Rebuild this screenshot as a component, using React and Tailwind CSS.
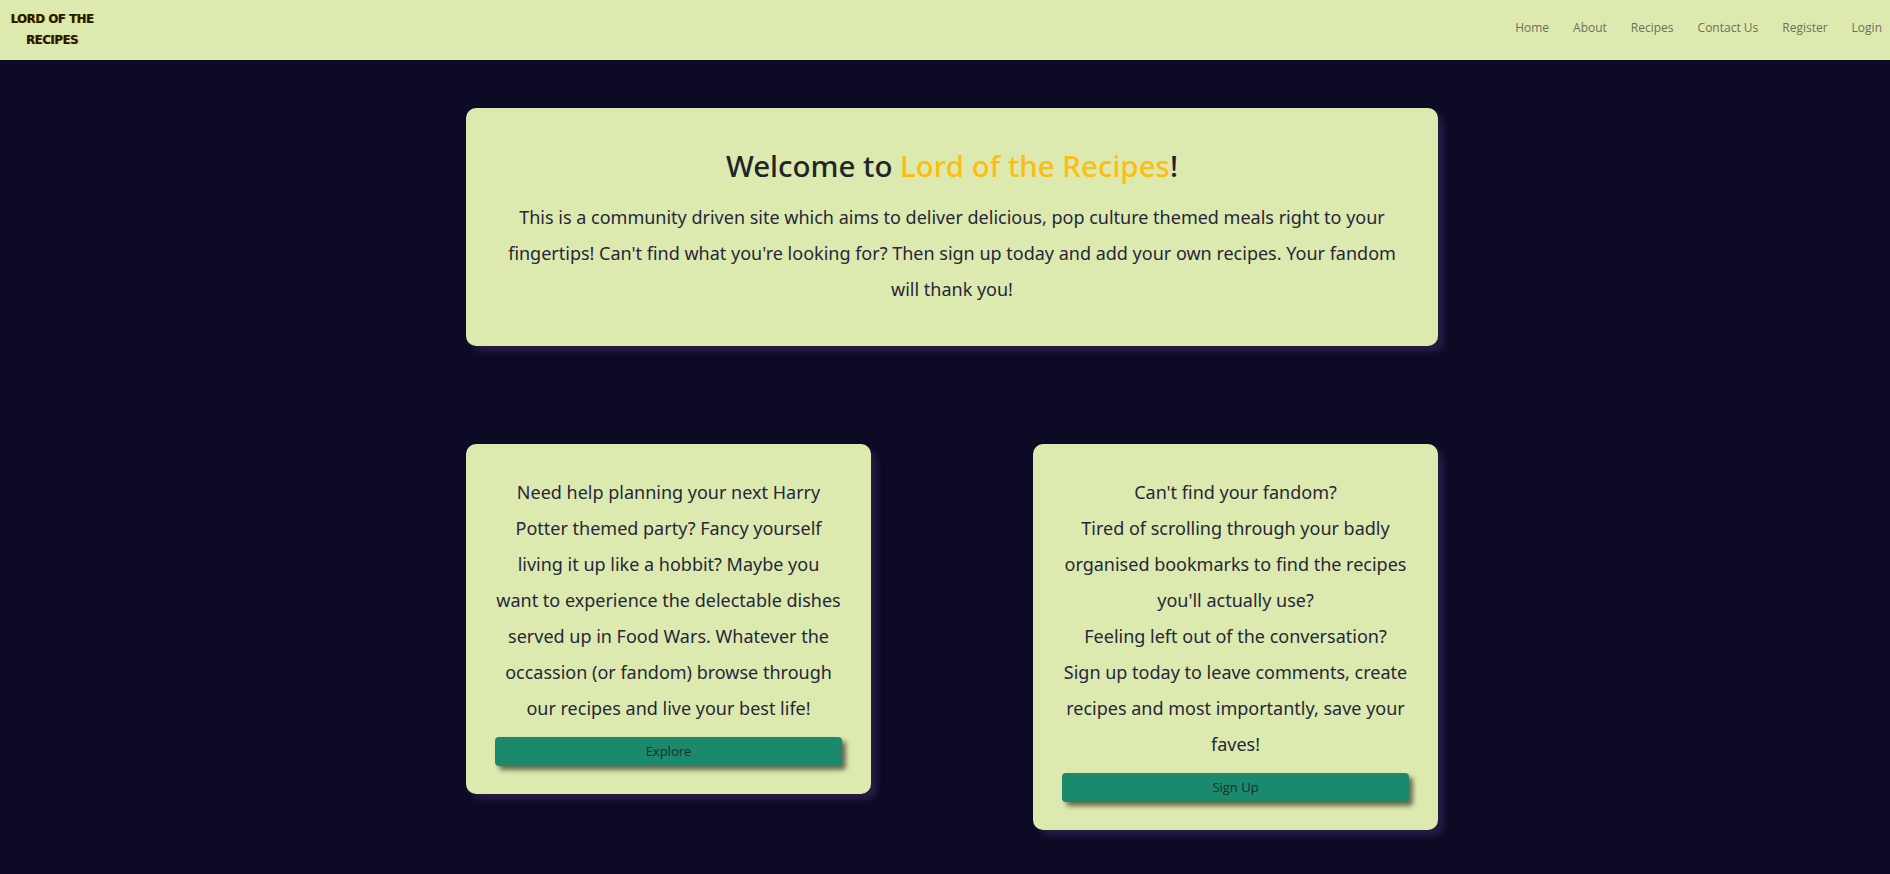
export default function App() {
  const navItems = ["Home", "About", "Recipes", "Contact Us", "Register", "Login"];
  return (
    <div className="min-h-screen bg-[#0c0a25] font-['Noto_Sans',sans-serif] text-[#212529]">
      <header className="h-[60px] bg-[#ddeaaf] flex items-center justify-between pl-[8px] pr-[8px]">
        <div className="w-[88px] text-center text-[13px] leading-[21px] font-bold text-[#1c1a10] font-['DejaVu_Sans_Condensed','DejaVu_Sans',sans-serif] tracking-[-0.4px] [text-shadow:1px_0_0_#c9a400] -mt-[3px]">
          LORD OF THE
          <br />
          RECIPES
        </div>
        <nav className="flex items-center gap-[24px] text-[12px] text-[#6e7058] font-['Open_Sans',sans-serif] mt-[-4px]">
          {navItems.map((item) => (
            <a key={item} href="#" className="leading-[20px]">
              {item}
            </a>
          ))}
        </nav>
      </header>

      <main className="w-[986px] mx-auto pl-[14px] pt-[48px] pb-[40px]">
        <section className="bg-[#ddeaaf] rounded-[10px] shadow-[6px_6px_6px_#261c44] text-center pt-[38px] pb-[39px] px-[30px]">
          <h1 className="text-[29.5px] leading-[40px] font-medium mb-[13px]">
            Welcome to <span className="text-[#ffbd10]">Lord of the Recipes</span>!
          </h1>
          <p className="text-[18px] leading-[36px] text-[#25273a]">
            This is a community driven site which aims to deliver delicious, pop culture themed meals right to your fingertips! Can't find what you're looking for? Then sign up today and add your own recipes. Your fandom will thank you!
          </p>
        </section>

        <div className="grid grid-cols-12 mt-[98px] items-start">
          <div className="col-span-5 bg-[#ddeaaf] rounded-[10px] shadow-[6px_6px_6px_#261c44] text-center px-[29px] pt-[30px] pb-[28px]">
            <p className="text-[18px] leading-[36px] text-[#25273a] mb-[11px]">
              Need help planning your next Harry Potter themed party? Fancy yourself living it up like a hobbit? Maybe you want to experience the delectable dishes served up in Food Wars. Whatever the occassion (or fandom) browse through our recipes and live your best life!
            </p>
            <button className="w-full h-[29px] rounded-[4px] bg-[#1b8a6c] text-[13px] text-[#1f2a2a] font-['Open_Sans',sans-serif] shadow-[4px_4px_5px_rgba(0,0,0,0.55)]">
              Explore
            </button>
          </div>
          <div className="col-span-5 col-start-8 bg-[#ddeaaf] rounded-[10px] shadow-[6px_6px_6px_#261c44] text-center px-[29px] pt-[30px] pb-[28px]">
            <p className="text-[18px] leading-[36px] text-[#25273a] mb-[11px]">
              Can't find your fandom?
              <br />
              Tired of scrolling through your badly organised bookmarks to find the recipes you'll actually use?
              <br />
              Feeling left out of the conversation?
              <br />
              Sign up today to leave comments, create recipes and most importantly, save your faves!
            </p>
            <button className="w-full h-[29px] rounded-[4px] bg-[#1b8a6c] text-[13px] text-[#1f2a2a] font-['Open_Sans',sans-serif] shadow-[4px_4px_5px_rgba(0,0,0,0.55)]">
              Sign Up
            </button>
          </div>
        </div>
      </main>
    </div>
  );
}
